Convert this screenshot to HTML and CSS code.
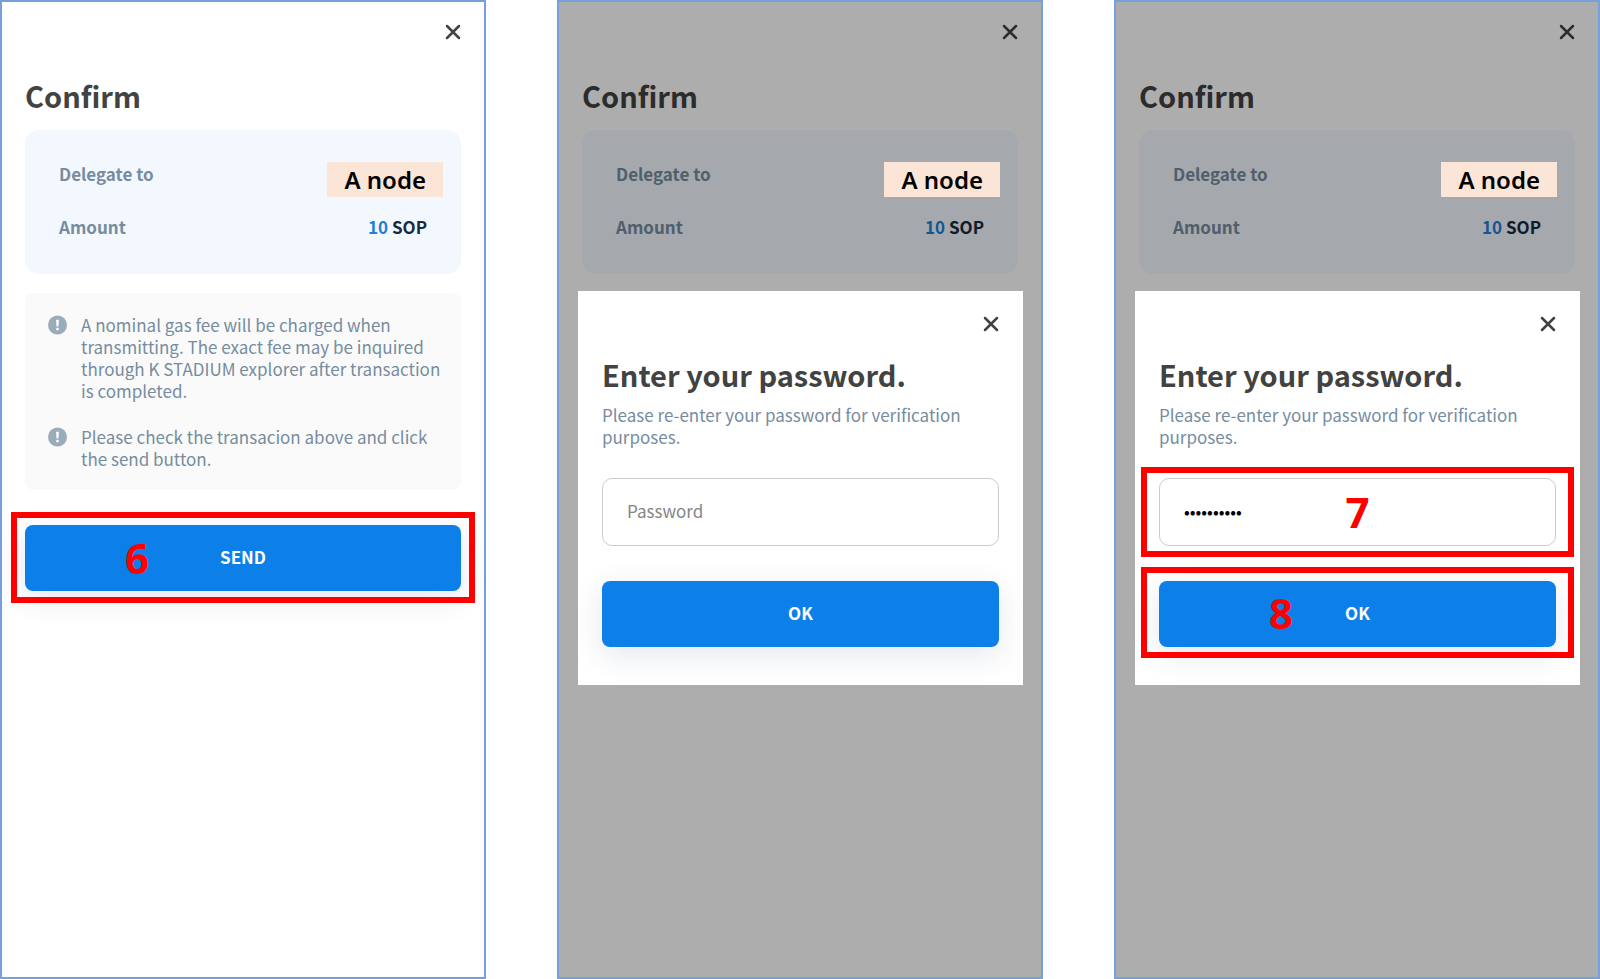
FILE: index.html
```
<!DOCTYPE html>
<html lang="en">
<head>
    <meta charset="UTF-8" />
    <meta name="viewport" content="width=device-width, initial-scale=1" />
    <title>Confirm delegation</title>
    <link rel="stylesheet" href="styles.css">
</head>
<body>
    <main class="screens">
        <!-- Step 6: send -->
        <section class="screen">
            <button class="close" type="button" aria-label="Close">
                <svg viewBox="0 0 16 16"><path d="M2 2L14 14M14 2L2 14" /></svg>
            </button>
            <h1 class="title">Confirm</h1>
            <dl class="summary">
                <div class="row"><dt>Delegate to</dt><dd class="node">A node</dd></div>
                <div class="row"><dt>Amount</dt><dd><span class="num">10</span> SOP</dd></div>
            </dl>
            <ul class="notes">
                <li>
                    <svg class="info" viewBox="0 0 20 20"><circle cx="10" cy="10" r="10" /><path d="M8.5 4.5H11.5L11 11.5H9Z" /><path d="M8.7 13H11.3V15.5H8.7Z" /></svg>
                    <p>A nominal gas fee will be charged when transmitting. The exact fee may be inquired through K STADIUM explorer after transaction is completed.</p>
                </li>
                <li>
                    <svg class="info" viewBox="0 0 20 20"><circle cx="10" cy="10" r="10" /><path d="M8.5 4.5H11.5L11 11.5H9Z" /><path d="M8.7 13H11.3V15.5H8.7Z" /></svg>
                    <p>Please check the transacion above and click the send button.</p>
                </li>
            </ul>
            <div class="action">
                <button class="btn" type="button">SEND</button>
                <div class="mark mark-send"><span>6</span></div>
            </div>
        </section>

        <!-- Password dialog, empty -->
        <section class="screen">
            <button class="close" type="button" aria-label="Close">
                <svg viewBox="0 0 16 16"><path d="M2 2L14 14M14 2L2 14" /></svg>
            </button>
            <h1 class="title">Confirm</h1>
            <dl class="summary">
                <div class="row"><dt>Delegate to</dt><dd class="node">A node</dd></div>
                <div class="row"><dt>Amount</dt><dd><span class="num">10</span> SOP</dd></div>
            </dl>
            <div class="overlay"></div>
            <form class="modal">
                <button class="close" type="button" aria-label="Close">
                    <svg viewBox="0 0 16 16"><path d="M2 2L14 14M14 2L2 14" /></svg>
                </button>
                <h2 class="title">Enter your password.</h2>
                <label class="hint" for="password-empty">Please re-enter your password for verification purposes.</label>
                <div class="field">
                    <input type="password" id="password-empty" placeholder="Password" autocomplete="off" />
                </div>
                <div class="action">
                    <button class="btn" type="button">OK</button>
                </div>
            </form>
        </section>

        <!-- Steps 7 and 8: password typed, OK -->
        <section class="screen">
            <button class="close" type="button" aria-label="Close">
                <svg viewBox="0 0 16 16"><path d="M2 2L14 14M14 2L2 14" /></svg>
            </button>
            <h1 class="title">Confirm</h1>
            <dl class="summary">
                <div class="row"><dt>Delegate to</dt><dd class="node">A node</dd></div>
                <div class="row"><dt>Amount</dt><dd><span class="num">10</span> SOP</dd></div>
            </dl>
            <div class="overlay"></div>
            <form class="modal">
                <button class="close" type="button" aria-label="Close">
                    <svg viewBox="0 0 16 16"><path d="M2 2L14 14M14 2L2 14" /></svg>
                </button>
                <h2 class="title">Enter your password.</h2>
                <label class="hint" for="password-typed">Please re-enter your password for verification purposes.</label>
                <div class="field">
                    <input type="password" id="password-typed" value="kstadium10" placeholder="Password" autocomplete="off" />
                    <div class="mark mark-password"><span>7</span></div>
                </div>
                <div class="action">
                    <button class="btn" type="button">OK</button>
                    <div class="mark mark-ok"><span>8</span></div>
                </div>
            </form>
        </section>
    </main>
</body>
</html>
```
FILE: styles.css
```
:root {
    --blue: #0d7fe9;
    --slate: #768c9f;
    --dark: #424242;
    --frame: #75a0dc;
    --mark: #fe0000;
}
* {
    box-sizing: border-box;
}
body {
    margin: 0;
    background: #fff;
    color: var(--dark);
    font-family: "Noto Sans CJK KR", "Noto Sans", sans-serif;
    font-size: 17px;
    line-height: 22px;
}
h1, h2, p, dl, dd, ul {
    margin: 0;
    padding: 0;
}
.screens {
    display: grid;
    grid-template-columns: repeat(3, 1fr);
    gap: 71px;
    min-height: 100vh;
}
.screen {
    position: relative;
    display: flex;
    flex-direction: column;
    padding: 22px 23px;
    border: 2px solid var(--frame);
}
.close {
    align-self: flex-end;
    width: 16px;
    height: 16px;
    padding: 0;
    border: none;
    background: none;
    cursor: pointer;
}
.close svg {
    display: block;
    width: 16px;
    height: 16px;
    fill: none;
    stroke: var(--dark);
    stroke-width: 2.5;
    stroke-linecap: round;
}
.title {
    margin-top: 33px;
    font-size: 29px;
    line-height: 44px;
    font-weight: 700;
}
.summary {
    position: relative;
    display: flex;
    flex-direction: column;
    gap: 31px;
    margin-top: 13px;
    padding: 33px 34px 36px;
    border-radius: 14px;
    background: #f3f8ff;
    font-weight: 700;
}
.row {
    display: flex;
    justify-content: space-between;
    color: #172b40;
}
.row dt {
    color: var(--slate);
}
.row .num {
    color: #1d7fd8;
}
.row .node {
    position: absolute;
    z-index: 2;
    top: 32px;
    right: 18px;
    padding: 0 17px;
    background: #fbe5d6;
    color: #000;
    font-family: "Noto Sans", sans-serif;
    font-size: 24px;
    line-height: 35px;
    font-weight: 600;
}
.notes {
    display: flex;
    flex-direction: column;
    gap: 24px;
    margin-top: 19px;
    padding: 21px 16px 20px 23px;
    border-radius: 8px;
    background: #fafafa;
    color: var(--slate);
    list-style: none;
}
.notes li {
    display: flex;
    align-items: flex-start;
    gap: 14px;
}
.info {
    flex: none;
    width: 19px;
    height: 22px;
    fill: #9aacba;
}
.info path {
    fill: #fff;
}
.field,
.action {
    position: relative;
    margin-top: 35px;
}
.btn {
    display: block;
    width: 100%;
    height: 66px;
    padding: 0 0 3px;
    border: none;
    border-radius: 8px;
    background: var(--blue);
    box-shadow: 0 8px 30px rgba(30, 60, 110, 0.12);
    color: #fff;
    font: inherit;
    font-weight: 700;
    cursor: pointer;
}
.overlay {
    position: absolute;
    z-index: 1;
    inset: 0;
    background: rgba(0, 0, 0, 0.32);
}
.modal {
    position: absolute;
    z-index: 3;
    top: 289px;
    left: 19px;
    right: 18px;
    display: flex;
    flex-direction: column;
    padding: 25px 24px 38px;
    background: #fff;
}
.modal .title {
    margin-top: 20px;
}
.hint {
    margin-top: 8px;
    color: var(--slate);
}
.field {
    margin-top: 30px;
}
.field input {
    display: block;
    width: 100%;
    height: 68px;
    padding: 0 24px 4px;
    border: 1px solid #ccc;
    border-radius: 10px;
    background: #fff;
    color: #000;
    font: inherit;
}
.field input::placeholder {
    color: #858585;
}

/* Numbered step frames */
.mark {
    position: absolute;
    inset: -11px -18px;
    display: flex;
    align-items: center;
    border: 6px solid var(--mark);
    color: var(--mark);
    font-family: "Noto Sans", sans-serif;
    font-size: 42px;
    line-height: 48px;
    font-weight: 700;
    pointer-events: none;
}
.mark-send {
    inset: -13px -14px -12px;
    padding-left: 108px;
}
.mark-password {
    justify-content: center;
}
.mark-ok {
    top: -14px;
    padding-left: 122px;
}

@media (max-width: 1200px) {
    .screens {
        grid-template-columns: 1fr;
        gap: 24px;
    }
    .screen {
        min-height: 720px;
    }
}
```
